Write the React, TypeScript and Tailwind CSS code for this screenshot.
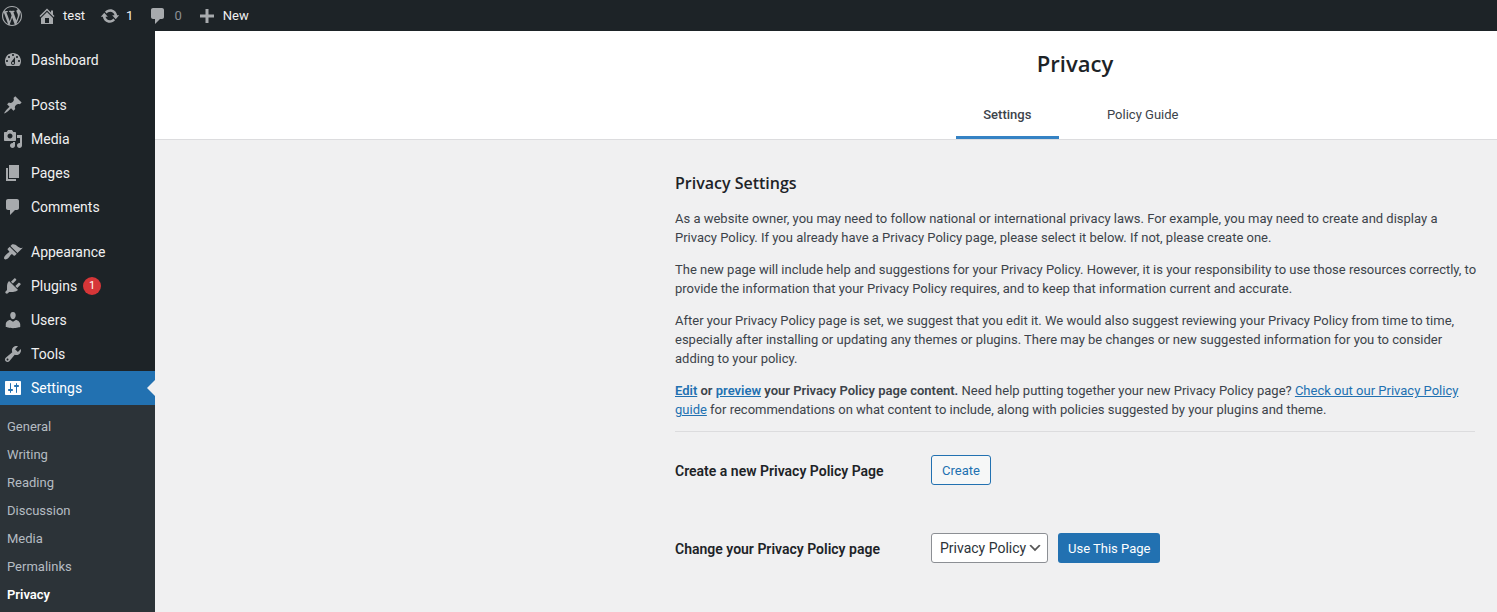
import type { ReactNode } from "react";

const icons = {
  wordpress:
    "M20 10c0-5.51-4.49-10-10-10C4.48 0 0 4.49 0 10c0 5.52 4.48 10 10 10 5.51 0 10-4.48 10-10zM7.78 15.37L4.37 6.22c.55-.02 1.17-.08 1.17-.08.5-.06.44-1.13-.06-1.11 0 0-1.45.11-2.37.11-.18 0-.37 0-.58-.01C4.12 2.69 6.87 1.11 10 1.11c2.33 0 4.45.87 6.05 2.34-.68-.11-1.65.39-1.65 1.58 0 .74.45 1.36.9 2.1.35.61.55 1.36.55 2.46 0 1.49-1.4 5-1.4 5l-3.03-8.37c.54-.02.82-.17.82-.17.5-.05.44-1.25-.06-1.22 0 0-1.44.12-2.38.12-.87 0-2.33-.12-2.33-.12-.5-.03-.56 1.2-.06 1.22l.92.08 1.26 3.41zM17.41 10c.24-.64.74-1.87.43-4.25.7 1.29 1.05 2.71 1.05 4.25 0 3.29-1.73 6.24-4.4 7.78.97-2.59 1.94-5.2 2.92-7.78zM6.1 18.09C3.12 16.65 1.11 13.53 1.11 10c0-1.3.23-2.48.72-3.59C3.25 10.3 4.67 14.2 6.1 18.09zm4.03-6.63l2.58 6.98c-.86.29-1.76.45-2.71.45-.79 0-1.57-.11-2.29-.33.81-2.38 1.62-4.74 2.42-7.1z",
  home: "M16 8.5l1.53 1.53-1.06 1.06L10 4.6l-6.47 6.49-1.06-1.06L10 2.5l4 4v-2h2v4zm-6-2.46l6 5.99V18H4v-5.97zM12 17v-5H8v5h4z",
  update:
    "M10.2 3.28c3.53 0 6.43 2.61 6.92 6h2.08l-3.5 4-3.5-4h2.32c-.45-1.97-2.21-3.45-4.32-3.45-1.45 0-2.73.71-3.54 1.78L4.95 5.66C6.23 4.2 8.11 3.28 10.2 3.28zm-.4 13.44c-3.52 0-6.43-2.61-6.92-6H.8l3.5-4c1.17 1.33 2.33 2.67 3.5 4H5.48c.45 1.97 2.21 3.45 4.32 3.45 1.45 0 2.73-.71 3.54-1.78l1.71 1.95c-1.28 1.46-3.15 2.38-5.25 2.38z",
  comments:
    "M5 2h9c1.1 0 2 .9 2 2v7c0 1.1-.9 2-2 2h-2l-5 5v-5H5c-1.1 0-2-.9-2-2V4c0-1.1.9-2 2-2z",
  plus: "M17 8.5v3h-5.5V17h-3v-5.5H3v-3h5.5V3h3v5.5z",
  dashboard:
    "M3.76 16h12.48c1.1-1.37 1.76-3.11 1.76-5 0-4.42-3.58-8-8-8s-8 3.58-8 8c0 1.89.66 3.63 1.76 5zM10 4c.55 0 1 .45 1 1s-.45 1-1 1-1-.45-1-1 .45-1 1-1zM6 6c.55 0 1 .45 1 1s-.45 1-1 1-1-.45-1-1 .45-1 1-1zm8 0c.55 0 1 .45 1 1s-.45 1-1 1-1-.45-1-1 .45-1 1-1zm-5.37 5.55L12 7v6c0 1.1-.9 2-2 2s-2-.9-2-2c0-.57.24-1.08.63-1.45zM4 10c.55 0 1 .45 1 1s-.45 1-1 1-1-.45-1-1 .45-1 1-1zm12 0c.55 0 1 .45 1 1s-.45 1-1 1-1-.45-1-1 .45-1 1-1zm-5 3c0-.55-.45-1-1-1s-1 .45-1 1 .45 1 1 1 1-.45 1-1z",
  post: "M10.44 3.02l1.82-1.82 6.36 6.35-1.83 1.82c-1.05-.68-2.48-.57-3.41.36l-.75.75c-.92.93-1.04 2.35-.35 3.41l-1.83 1.82-2.41-2.41-2.8 2.79c-.42.42-3.38 2.71-3.8 2.29s1.86-3.39 2.28-3.81l2.79-2.79L4.1 9.36l1.83-1.82c1.05.69 2.48.57 3.4-.36l.75-.75c.93-.92 1.05-2.35.36-3.41z",
  media:
    "M13 11V4c0-.55-.45-1-1-1h-1.67L9 1H5L3.67 3H2c-.55 0-1 .45-1 1v7c0 .55.45 1 1 1h10c.55 0 1-.45 1-1zM7 4.5c1.38 0 2.5 1.12 2.5 2.5S8.38 9.5 7 9.5 4.5 8.38 4.5 7 5.62 4.5 7 4.5zM14 6h5v10.5c0 1.38-1.12 2.5-2.5 2.5S14 17.88 14 16.5s1.12-2.5 2.5-2.5c.17 0 .34.02.5.05V9h-3V6zm-4 8.05V13h2v3.5c0 1.38-1.12 2.5-2.5 2.5S7 17.88 7 16.5 8.12 14 9.5 14c.17 0 .34.02.5.05z",
  page: "M6 15V2h10v13H6zm-1 1h8v2H3V5h2v11z",
  appearance:
    "M14.48 11.06L7.41 3.99l1.5-1.5c.5-.56 2.3-.47 3.51.32 1.21.8 1.43 1.28 2.91 2.1 1.18.64 2.45 1.26 4.45.85zm-.71.71L6.7 4.7 4.93 6.47c-.39.39-.39 1.02 0 1.41l1.06 1.06c.39.39.39 1.03 0 1.42-.6.6-1.43 1.11-2.21 1.69-.35.26-.7.53-1.01.84C1.43 14.23.4 16.08 1.4 17.07c.99 1 2.84-.03 4.18-1.36.31-.31.58-.66.85-1.02.57-.78 1.08-1.61 1.69-2.21.39-.39 1.02-.39 1.41 0l1.06 1.06c.39.39 1.02.39 1.41 0z",
  plugins:
    "M13.11 4.36L9.87 7.6 8 5.73l3.24-3.24c.35-.34 1.05-.2 1.56.32.52.51.66 1.21.31 1.55zm-8 1.77l.91-1.12 9.01 9.01-1.19.84c-.71.71-2.63 1.16-3.82 1.16H6.14L4.9 17.26c-.59.59-1.54.59-2.12 0-.59-.58-.59-1.53 0-2.12l1.24-1.24v-3.88c0-1.13.4-3.19 1.09-3.89zm7.26 3.97l3.24-3.24c.34-.35 1.04-.21 1.55.31.52.51.66 1.21.31 1.55l-3.24 3.25z",
  users:
    "M10 9.25c-2.27 0-2.73-3.44-2.73-3.44C7 4.02 7.82 2 9.97 2c2.16 0 2.98 2.02 2.71 3.81 0 0-.41 3.44-2.68 3.44zm0 2.57L12.72 10c2.39 0 4.52 2.33 4.52 4.53v2.49s-3.65 1.13-7.24 1.13c-3.65 0-7.24-1.13-7.24-1.13v-2.49c0-2.25 1.94-4.48 4.47-4.48z",
  tools:
    "M16.68 9.77c-1.34 1.34-3.3 1.67-4.95.99l-5.41 6.52c-.99.99-2.59.99-3.58 0s-.99-2.59 0-3.57l6.52-5.42c-.68-1.65-.35-3.61.99-4.95 1.28-1.28 3.12-1.62 4.72-1.06l-2.89 2.89 2.82 2.82 2.86-2.87c.53 1.58.18 3.39-1.08 4.65zM3.81 16.21c.4.39 1.04.39 1.43 0 .4-.4.4-1.04 0-1.43-.39-.4-1.03-.4-1.43 0-.39.39-.39 1.03 0 1.43z",
  settings:
    "M18 16V4c0-.55-.45-1-1-1H3c-.55 0-1 .45-1 1v12c0 .55.45 1 1 1h14c.55 0 1-.45 1-1zM8 11h1c.55 0 1 .45 1 1s-.45 1-1 1H8v1.5c0 .28-.22.5-.5.5s-.5-.22-.5-.5V13H6c-.55 0-1-.45-1-1s.45-1 1-1h1V5.5c0-.28.22-.5.5-.5s.5.22.5.5V11zm5-2h-1c-.55 0-1-.45-1-1s.45-1 1-1h1V5.5c0-.28.22-.5.5-.5s.5.22.5.5V7h1c.55 0 1 .45 1 1s-.45 1-1 1h-1v5.5c0 .28-.22.5-.5.5s-.5-.22-.5-.5V9z",
  chevron: "M5 6l5 5 5-5 2 1-7 7-7-7z",
};

type IconName = keyof typeof icons;

function Icon({ name, className = "size-5" }: { name: IconName; className?: string }) {
  return (
    <svg viewBox="0 0 20 20" aria-hidden="true" fill="currentColor" className={`shrink-0 ${className}`}>
      <path fillRule="evenodd" d={icons[name]} />
    </svg>
  );
}

function BarItem({ icon, label, muted }: { icon: IconName; label: string; muted?: boolean }) {
  return (
    <a href="#" className="flex items-center gap-1.5">
      <Icon name={icon} className="size-5 text-[#a7aaad]" />
      <span className={muted ? "text-[#8c8f94]" : ""}>{label}</span>
    </a>
  );
}

const menuGroups: { icon: IconName; label: string; count?: number; current?: boolean }[][] = [
  [{ icon: "dashboard", label: "Dashboard" }],
  [
    { icon: "post", label: "Posts" },
    { icon: "media", label: "Media" },
    { icon: "page", label: "Pages" },
    { icon: "comments", label: "Comments" },
  ],
  [
    { icon: "appearance", label: "Appearance" },
    { icon: "plugins", label: "Plugins", count: 1 },
    { icon: "users", label: "Users" },
    { icon: "tools", label: "Tools" },
    { icon: "settings", label: "Settings", current: true },
  ],
];

const submenu = ["General", "Writing", "Reading", "Discussion", "Media", "Permalinks", "Privacy"];

function Sidebar() {
  return (
    <nav aria-label="Main menu" className="flex w-[155px] shrink-0 flex-col bg-[#1d2327] pt-3 text-sm text-[#f0f0f1]">
      <div className="flex flex-col gap-[11px]">
        {menuGroups.map((group, i) => (
          <ul key={i}>
            {group.map((item) => (
              <li key={item.label}>
                <a
                  href="#"
                  className={`relative flex h-[34px] items-center pl-[3px] ${item.current ? "bg-[#2271b1] text-white" : ""}`}
                >
                  <Icon name={item.icon} className={item.current ? "size-5 text-white" : "size-5 text-[#a7aaad]"} />
                  <span className="pl-2">{item.label}</span>
                  {item.count && (
                    <span className="ml-1.5 flex size-[18px] items-center justify-center rounded-full bg-[#d63638] text-[11px] text-white">
                      {item.count}
                    </span>
                  )}
                  {item.current && (
                    <span className="absolute right-0 top-1/2 -translate-y-1/2 border-8 border-transparent border-r-[#f0f0f1]" />
                  )}
                </a>
              </li>
            ))}
          </ul>
        ))}
      </div>
      <ul className="grow bg-[#2c3338] pt-2 text-[13px] text-[#b5bcc2]">
        {submenu.map((label) => (
          <li key={label}>
            <a
              href="#"
              className={`flex h-7 items-center pl-[7px] ${label === "Privacy" ? "font-semibold text-white" : ""}`}
            >
              {label}
            </a>
          </li>
        ))}
      </ul>
    </nav>
  );
}

function TextLink({ children, strong }: { children: ReactNode; strong?: boolean }) {
  return (
    <a href="#" className={`text-[#2271b1] underline ${strong ? "font-semibold" : ""}`}>
      {children}
    </a>
  );
}

export default function App() {
  return (
    <div className="flex min-h-screen flex-col bg-[#f0f0f1] font-[Roboto,sans-serif] text-[13px] text-[#3c434a]">
      <header className="flex h-[31px] items-center gap-[15px] bg-[#1d2327] pl-0.5 text-[#f0f0f1]">
        <a href="#" aria-label="About WordPress">
          <Icon name="wordpress" className="size-5 text-[#a7aaad]" />
        </a>
        <BarItem icon="home" label="test" />
        <BarItem icon="update" label="1" />
        <BarItem icon="comments" label="0" muted />
        <BarItem icon="plus" label="New" />
      </header>

      <div className="flex grow">
        <Sidebar />
        <main className="min-w-0 grow">
          <div className="border-b border-[#dcdcde] bg-white pr-[22px]">
            <div className="ml-auto flex w-full max-w-[800px] flex-col items-center">
              <h1 className="pt-[15px] font-['Open_Sans',sans-serif] text-[22px] leading-[34px] font-semibold text-[#1d2327]">
                Privacy
              </h1>
              <div className="grid grid-cols-2 gap-8 pt-[11px]">
                <a
                  href="#"
                  aria-current="page"
                  className="border-b-[3px] border-[#3582c4] px-4 pt-[15px] pb-3 text-center leading-[18px] font-medium"
                >
                  Settings
                </a>
                <a href="#" className="px-4 pt-[15px] pb-[15px] text-center leading-[18px]">
                  Policy Guide
                </a>
              </div>
            </div>
          </div>

          <div className="pr-[22px]">
            <div className="ml-auto w-full max-w-[800px] pt-[31px] leading-[19px]">
              <h2 className="font-['Open_Sans',sans-serif] text-base leading-6 font-semibold text-[#1d2327]">
                Privacy Settings
              </h2>
              <div className="-mr-1 flex flex-col gap-[13px] pt-3.5">
                <p>
                  As a website owner, you may need to follow national or international privacy laws. For example, you
                  may need to create and display a Privacy Policy. If you already have a Privacy Policy page, please
                  select it below. If not, please create one.
                </p>
                <p>
                  The new page will include help and suggestions for your Privacy Policy. However, it is your
                  responsibility to use those resources correctly, to provide the information that your Privacy Policy
                  requires, and to keep that information current and accurate.
                </p>
                <p>
                  After your Privacy Policy page is set, we suggest that you edit it. We would also suggest reviewing
                  your Privacy Policy from time to time, especially after installing or updating any themes or plugins.
                  There may be changes or new suggested information for you to consider adding to your policy.
                </p>
                <p>
                  <TextLink strong>Edit</TextLink> <strong className="font-semibold">or</strong>{" "}
                  <TextLink strong>preview</TextLink>{" "}
                  <strong className="font-semibold">your Privacy Policy page content.</strong> Need help putting
                  together your new Privacy Policy page? <TextLink>Check out our Privacy Policy guide</TextLink> for
                  recommendations on what content to include, along with policies suggested by your plugins and theme.
                </p>
              </div>
              <hr className="mt-3 border-[#dcdcde]" />
              <div className="grid grid-cols-[256px_1fr] items-center gap-y-12 pt-[23px]">
                <label htmlFor="create-page" className="pt-0.5 text-sm font-semibold text-[#1d2327]">
                  Create a new Privacy Policy Page
                </label>
                <div className="flex">
                  <button
                    id="create-page"
                    type="button"
                    className="h-[30px] rounded-[3px] border border-[#2271b1] bg-[#f6f7f7] px-2.5 text-[#2271b1]"
                  >
                    Create
                  </button>
                </div>
                <label htmlFor="policy-page" className="pt-0.5 text-sm font-semibold text-[#1d2327]">
                  Change your Privacy Policy page
                </label>
                <div className="flex gap-2.5">
                  <div className="relative">
                    <select
                      id="policy-page"
                      className="h-[30px] appearance-none rounded-[3px] border border-[#8c8f94] bg-white pr-5 pl-2 text-sm text-[#2c3338]"
                    >
                      <option>Privacy Policy</option>
                    </select>
                    <Icon
                      name="chevron"
                      className="pointer-events-none absolute top-[7px] right-[5px] size-4 text-[#555]"
                    />
                  </div>
                  <button type="button" className="h-[30px] rounded-[3px] bg-[#2271b1] px-2.5 text-white">
                    Use This Page
                  </button>
                </div>
              </div>
            </div>
          </div>
        </main>
      </div>
    </div>
  );
}
